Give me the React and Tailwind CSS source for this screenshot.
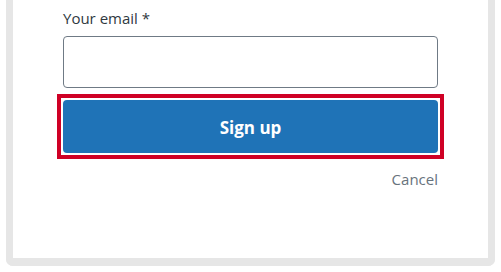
export default function App() {
  return (
    <div className="min-h-[272px] bg-white px-[6px] pb-[6px] font-['Open_Sans',sans-serif]">
      {/* card, its top edge scrolled out of view */}
      <div className="rounded-b-[7px] border-x-[7px] border-b-[8px] border-[#e6e6e6] bg-white px-[50px] pt-[8px] pb-[69px]">
        <label htmlFor="email" className="block text-[15px] leading-[20px] font-medium text-[#2f3941]">
          Your email <span>*</span>
        </label>
        <input
          id="email"
          type="email"
          className="mt-[8px] block h-[52px] w-full rounded-[4px] border border-[#6f7a85] bg-white px-3 text-[15px] outline-none"
        />
        {/* focus frame around the button */}
        <div className="-mx-[6px] mt-[6px] border-[4px] border-[#cf0025] p-[2px]">
          <button
            type="button"
            className="block h-[53px] w-full rounded-[4px] bg-[#1f73b7] pt-[3px] text-[17px] font-bold text-white"
          >
            Sign up
          </button>
        </div>
        <div className="mt-[10px] flex justify-end">
          <a href="#" className="text-[15px] leading-[20px] text-[#68737d]">
            Cancel
          </a>
        </div>
      </div>
    </div>
  );
}
